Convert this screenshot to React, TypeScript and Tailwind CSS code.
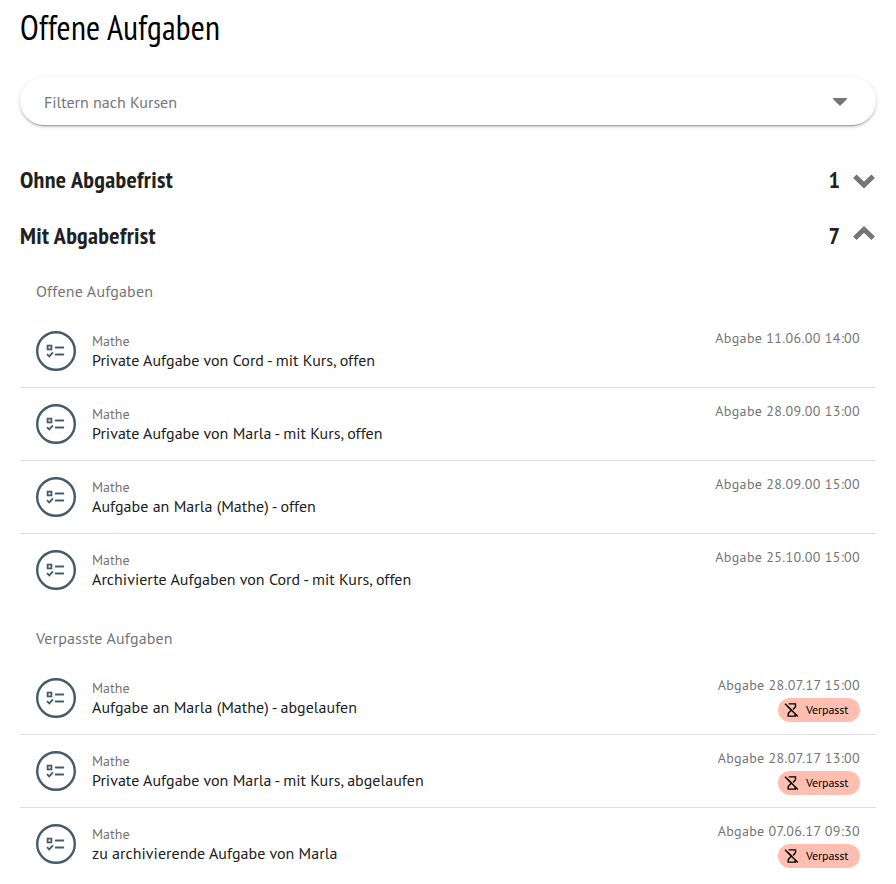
import type { ReactNode } from "react";

type Task = { title: string; due: string; missed?: boolean };

const openTasks: Task[] = [
  { title: "Private Aufgabe von Cord - mit Kurs, offen", due: "11.06.00 14:00" },
  { title: "Private Aufgabe von Marla - mit Kurs, offen", due: "28.09.00 13:00" },
  { title: "Aufgabe an Marla (Mathe) - offen", due: "28.09.00 15:00" },
  { title: "Archivierte Aufgaben von Cord - mit Kurs, offen", due: "25.10.00 15:00" },
];

const missedTasks: Task[] = [
  { title: "Aufgabe an Marla (Mathe) - abgelaufen", due: "28.07.17 15:00", missed: true },
  { title: "Private Aufgabe von Marla - mit Kurs, abgelaufen", due: "28.07.17 13:00", missed: true },
  { title: "zu archivierende Aufgabe von Marla", due: "07.06.17 09:30", missed: true },
];

function TaskIcon() {
  return (
    <svg className="size-10 shrink-0" viewBox="0 0 40 40" fill="none" stroke="#455b6a">
      <circle cx="20" cy="20" r="18.8" strokeWidth="2.4" />
      <rect x="11.6" y="14.6" width="3.8" height="3.8" strokeWidth="1.8" />
      <path d="M19.7 16.5H27.3M19.7 23.5H27.3" strokeWidth="1.8" strokeLinecap="round" />
      <path d="M11 23.2L13.2 25.4L17 21.4" strokeWidth="1.8" />
    </svg>
  );
}

function MissedBadge() {
  return (
    <div className="mt-0.5 flex h-6 w-[82px] items-center rounded-full bg-[#ffbeb0] pl-1.5 text-black">
      <svg className="size-4 shrink-0" viewBox="0 0 16 16" fill="none" stroke="currentColor" strokeWidth="1.4">
        <path d="M4.6 1.9H11.5V4.7L9 7.4M3.9 4.5L7 7.6V8.4L4.2 11.5V14.1H11.3V11.8" />
        <path d="M1 1.7L13.8 14.5" />
      </svg>
      <span className="ml-1.5 text-[12px] leading-4 tracking-[-0.1px]">Verpasst</span>
    </div>
  );
}

function TaskRow({ task, last }: { task: Task; last: boolean }) {
  return (
    <li className={last ? "flex h-[73px] px-4 pt-4" : "flex h-[73px] border-b border-[#dedede] px-4 pt-4"}>
      <TaskIcon />
      <div className="ml-4 flex-1 whitespace-nowrap">
        <div className="text-[14px] leading-5 text-[#757575]">Mathe</div>
        <div className="text-[16px] leading-[19px] tracking-[0.02px] text-[#212121]">{task.title}</div>
      </div>
      <div className="-mt-1 flex flex-col items-end whitespace-nowrap">
        <div className="text-[14px] leading-[22px] tracking-[0.33px] text-[#757575]">
          Abgabe {task.due}
        </div>
        {task.missed && <MissedBadge />}
      </div>
    </li>
  );
}

function TaskList({ label, tasks }: { label: string; tasks: Task[] }) {
  return (
    <section className="pb-[7px]">
      <h3 className="flex h-12 items-center px-4 text-[16px] tracking-[0.16px] text-[#757575]">{label}</h3>
      <ul>
        {tasks.map((t, i) => (
          <TaskRow key={t.title} task={t} last={i === tasks.length - 1} />
        ))}
      </ul>
    </section>
  );
}

function PanelHeader({ title, count, children }: { title: string; count: number; children: ReactNode }) {
  return (
    <h2 className="flex h-14 items-center font-['PT_Sans_Narrow','PT_Sans','Noto_Sans',sans-serif] text-[24px] font-bold text-[#212121]">
      <span className="pb-px tracking-[0.34px]">{title}</span>
      <span className="mr-3 ml-auto pb-px">{count}</span>
      <svg className="h-6 w-6" viewBox="0 0 24 24" fill="none" stroke="#757575" strokeWidth="5">
        {children}
      </svg>
    </h2>
  );
}

export default function App() {
  return (
    <main className="h-[884px] overflow-hidden bg-white px-5 font-['PT_Sans','Noto_Sans',sans-serif]">
      <h1 className="flex h-[77px] pt-[5px] font-['PT_Sans_Narrow','PT_Sans','Noto_Sans',sans-serif] text-[34px] leading-[44px] tracking-[0.25px] text-black">
        Offene Aufgaben
      </h1>
      <div className="flex h-12 items-center justify-between rounded-full bg-white px-6 text-[16px] text-[#757575] shadow-[0_3px_1px_-2px_rgba(0,0,0,0.2),0_2px_2px_0_rgba(0,0,0,0.14),0_1px_5px_0_rgba(0,0,0,0.12)]">
        <span className="pt-0.5">Filtern nach Kursen</span>
        <svg className="mt-0.5 mr-[5px] h-2 w-3.5" viewBox="0 0 14 8" fill="#757575">
          <path d="M0 0H14V1L7 8L0 1Z" />
        </svg>
      </div>
      <div className="pt-[27px]">
        <PanelHeader title="Ohne Abgabefrist" count={1}>
          <path d="M2.8 8.3L12 17L21.2 8.3" />
        </PanelHeader>
        <PanelHeader title="Mit Abgabefrist" count={7}>
          <path d="M2.8 14.2L12 5.5L21.2 14.2" />
        </PanelHeader>
      </div>
      <div className="pt-[3px]">
        <TaskList label="Offene Aufgaben" tasks={openTasks} />
        <TaskList label="Verpasste Aufgaben" tasks={missedTasks} />
      </div>
    </main>
  );
}
